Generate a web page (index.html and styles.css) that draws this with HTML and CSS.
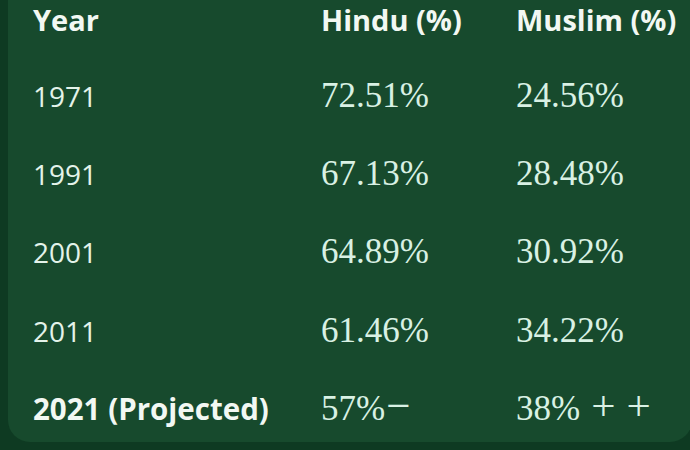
FILE: index.html
```html
<!DOCTYPE html>
<html>
<head>
<meta charset="utf-8">
<link rel="stylesheet" href="styles.css">
</head>
<body>
<div class="card">
  <div class="grid">
    <div class="th">Year</div>
    <div class="th">Hindu (%)</div>
    <div class="th">Muslim (%)</div>

    <div class="td">1971</div>
    <div class="td"><span class="m">72.51%</span></div>
    <div class="td"><span class="m">24.56%</span></div>

    <div class="td">1991</div>
    <div class="td"><span class="m">67.13%</span></div>
    <div class="td"><span class="m">28.48%</span></div>

    <div class="td">2001</div>
    <div class="td"><span class="m">64.89%</span></div>
    <div class="td"><span class="m">30.92%</span></div>

    <div class="td">2011</div>
    <div class="td"><span class="m">61.46%</span></div>
    <div class="td"><span class="m">34.22%</span></div>

    <div class="td strong">2021 (Projected)</div>
    <div class="td"><span class="m">57%<span class="op tight">−</span></span></div>
    <div class="td"><span class="m">38%<span class="op">+</span><span class="op">+</span></span></div>
  </div>
</div>
</body>
</html>
```

FILE: styles.css
```css
html, body {
  margin: 0;
  padding: 0;
  background: #0e3a22;
  width: 690px;
  height: 450px;
  overflow: hidden;
}

.card {
  margin-left: 8px;
  width: 684px;
  height: 442px;
  background: #174a2d;
  border-radius: 0 0 22px 22px;
  box-sizing: border-box;
  padding-left: 25px;
}

.grid {
  display: grid;
  grid-template-columns: 288px 195px 1fr;
  grid-template-rows: 57px;
  grid-auto-rows: 78.2px;
}

.th {
  font-family: "Open Sans", sans-serif;
  font-weight: 700;
  font-size: 29px;
  line-height: 40px;
  color: #f2f8f3;
  white-space: nowrap;
}

.td {
  font-family: "Open Sans", sans-serif;
  font-size: 28px;
  line-height: 78.2px;
  color: #e4f3ea;
  white-space: nowrap;
}

.td.strong {
  font-weight: 700;
  font-size: 29.5px;
  color: #f2f8f3;
}

.m {
  font-family: "Liberation Serif", serif;
  font-size: 35px;
  line-height: 1;
  color: #d9f1e4;
}

.op {
  font-size: 43px;
  margin-left: 11px;
}

.op.tight {
  margin-left: 1px;
}
```
